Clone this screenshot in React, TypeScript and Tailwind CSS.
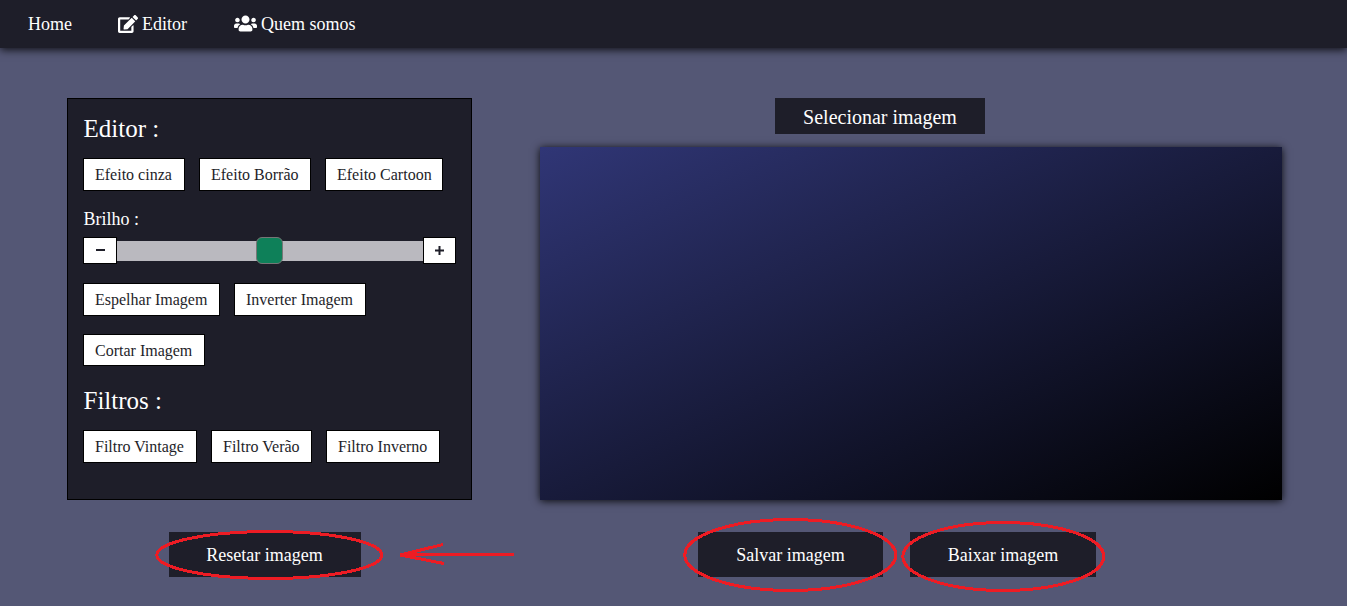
import { FaEdit, FaUsers } from 'react-icons/fa';

function ToolButton({ children, className = 'h-[33px]' }: { children: string; className?: string }) {
  return (
    <button
      className={`${className} border border-black bg-white pl-[11px] text-left text-base leading-none whitespace-nowrap text-[#1e1e29]`}
    >
      {children}
    </button>
  );
}

function Annotations() {
  return (
    <svg
      className="pointer-events-none absolute inset-0"
      width="1347"
      height="606"
      fill="none"
      stroke="#ed1c24"
      strokeWidth="3"
      shapeRendering="crispEdges"
    >
      <ellipse cx="269.3" cy="555" rx="112.5" ry="23.5" />
      <ellipse cx="790.3" cy="555" rx="105.5" ry="35.5" />
      <ellipse cx="1003.3" cy="556.5" rx="100.5" ry="34" />
      <path d="M400 554.5H514M443 544.5L400 555L444 563.5" />
    </svg>
  );
}

export default function App() {
  return (
    <div className="relative h-[606px] w-[1347px] overflow-hidden bg-[#545775] font-['Liberation_Serif',serif] text-white">
      <nav className="flex h-12 items-center bg-[#1e1e29] pl-7 text-lg leading-none shadow-[0_2px_8px_rgba(0,0,0,0.8)]">
        <a className="w-[90px]">Home</a>
        <a className="flex w-[116px] items-center gap-1">
          <FaEdit className="-mt-px h-[18px] w-[20px]" />
          Editor
        </a>
        <a className="flex items-center gap-1">
          <FaUsers className="-mt-0.5 h-[19px] w-[23px]" />
          Quem somos
        </a>
      </nav>

      <main className="flex pt-[50px] pl-[67px]">
        <div className="flex w-[405px] flex-col items-center">
          <section className="h-[402px] w-full border border-black bg-[#1e1e29] px-[15px] pt-[15px]">
            <h2 className="h-[44px] pl-[0.5px] text-[25px] leading-[30px]">Editor :</h2>
            <div className="flex gap-[14px]">
              <ToolButton className="h-[33px] w-[102px]">Efeito cinza</ToolButton>
              <ToolButton className="h-[33px] w-[112px]">Efeito Borrão</ToolButton>
              <ToolButton className="h-[33px] w-[118px]">Efeito Cartoon</ToolButton>
            </div>
            <p className="mt-[18px] h-[28px] pl-[0.5px] text-lg leading-5">Brilho :</p>
            <div className="flex h-[27px] w-[373px] items-center">
              <button className="flex h-[27px] w-[34px] items-center justify-center border border-black bg-white pb-0.5">
                <span className="h-0.5 w-[9px] bg-[#1e1e29]" />
              </button>
              <div className="flex h-5 flex-1 items-center bg-[#bab9bf] pl-[139px]">
                <span className="h-[27px] w-[27px] shrink-0 rounded-[6px] border border-[#767676] bg-[#0e8059]" />
              </div>
              <button className="flex h-[27px] w-[33px] items-center justify-center border border-black bg-white">
                <svg width="9" height="9" fill="#1e1e29">
                  <path d="M0 3.5h9v2H0zM3.5 0h2v9h-2z" />
                </svg>
              </button>
            </div>
            <div className="mt-[19px] flex flex-wrap gap-x-[14px] gap-y-[18px]">
              <ToolButton className="h-[33px] w-[137px]">Espelhar Imagem</ToolButton>
              <ToolButton className="h-[33px] w-[132px]">Inverter Imagem</ToolButton>
              <ToolButton className="h-8 w-[122px] pt-px">Cortar Imagem</ToolButton>
            </div>
            <h2 className="mt-5 mb-[14px] pl-[0.5px] text-[25px] leading-[30px]">Filtros :</h2>
            <div className="flex gap-[14px]">
              <ToolButton className="h-[33px] w-[114px]">Filtro Vintage</ToolButton>
              <ToolButton className="h-[33px] w-[101px]">Filtro Verão</ToolButton>
              <ToolButton className="h-[33px] w-[114px]">Filtro Inverno</ToolButton>
            </div>
          </section>
          <button className="mt-8 mr-[9px] h-[45px] w-[192px] bg-[#1e1e29] pr-px text-lg">Resetar imagem</button>
        </div>

        <div className="ml-[68px] w-[742px]">
          <button className="ml-[235px] block h-9 w-[210px] bg-[#1e1e29] pt-0.5 text-xl leading-none">
            Selecionar imagem
          </button>
          <div className="mt-[13px] h-[353px] bg-linear-[to_bottom_right,#303676,#000000] shadow-[0_1px_8px_rgba(0,0,0,0.9)]" />
          <div className="mt-8 ml-[158px] flex gap-[27px]">
            <button className="h-[45px] w-[185px] bg-[#1e1e29] text-lg">Salvar imagem</button>
            <button className="h-[45px] w-[186px] bg-[#1e1e29] text-lg">Baixar imagem</button>
          </div>
        </div>
      </main>
      <Annotations />
    </div>
  );
}
